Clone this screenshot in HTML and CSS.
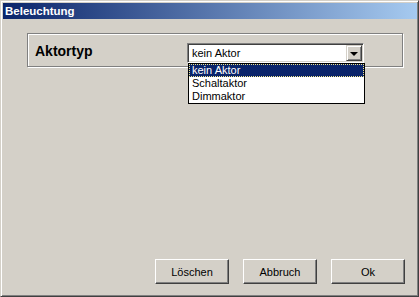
FILE: index.html
```html
<!DOCTYPE html>
<html lang="de">
<head>
  <meta charset="UTF-8">
  <title>Beleuchtung</title>
  <link rel="stylesheet" href="styles.css">
</head>
<body>
  <div class="window">
    <div class="titlebar">Beleuchtung</div>

    <div class="group">
      <label class="label">Aktortyp</label>
      <div class="combo">
        <span class="combo-text">kein Aktor</span>
        <span class="combo-btn"><span class="arrow"></span></span>
        <ul class="droplist">
          <li class="selected">kein Aktor</li>
          <li>Schaltaktor</li>
          <li>Dimmaktor</li>
        </ul>
      </div>
    </div>

    <div class="footer">
      <button class="btn">Löschen</button>
      <button class="btn">Abbruch</button>
      <button class="btn">Ok</button>
    </div>
  </div>
</body>
</html>
```

FILE: styles.css
```css
body { margin: 0; background: #d4d0c8; font-family: "Liberation Sans", Arial, sans-serif; }

.window {
  width: 419px; height: 297px; box-sizing: border-box;
  display: flex; flex-direction: column;
  background: #d4d0c8;
  border: 1px solid; border-color: #d4d0c8 #404040 #404040 #d4d0c8;
  box-shadow: inset 1px 1px #fff, inset -1px -1px #808080;
  padding: 2px 1px 1px 2px;
}

.titlebar {
  height: 16px; line-height: 16px; padding-left: 2px;
  background: linear-gradient(to right, #0a246a, #a6caf0);
  color: #fff; font-weight: bold; font-size: 11.5px;
}

.group {
  position: relative;
  width: 376px; height: 34px; box-sizing: border-box;
  margin: 14px 0 0 24px;
  display: flex; align-items: flex-start;
  padding: 9px 0 0 7px;
  border: 1px solid #808080;
  box-shadow: inset 1px 1px #fff, 1px 1px #fff;
}
.label { width: 152px; font-size: 14px; font-weight: bold; line-height: 16px; }

.combo {
  position: relative;
  width: 177px; height: 20px; box-sizing: border-box;
  background: #fff;
  border: 1px solid; border-color: #808080 #fff #fff #808080;
  box-shadow: inset 1px 1px #404040, inset -1px -1px #d4d0c8;
  display: flex; align-items: center;
  padding: 1px;
}
.combo-text { flex: 1; font-size: 11px; line-height: 16px; padding-left: 3px; }
.combo-btn {
  width: 16px; height: 16px; box-sizing: border-box;
  background: #d4d0c8;
  border: 1px solid; border-color: #d4d0c8 #404040 #404040 #d4d0c8;
  box-shadow: inset 1px 1px #fff, inset -1px -1px #808080;
  display: flex; align-items: center; justify-content: center;
}
.arrow { width: 0; height: 0; border-left: 4px solid transparent; border-right: 4px solid transparent; border-top: 4px solid #000; margin-top: 1px; }

.droplist {
  position: absolute; left: 0; top: calc(100% + 1px);
  width: 177px; box-sizing: border-box;
  margin: 0; padding: 0; list-style: none;
  background: #fff; border: 1px solid #000;
  font-size: 11px; z-index: 2;
}
.droplist li { height: 13px; line-height: 13px; padding-left: 3px; }
.droplist li.selected { background: #0a246a; color: #fff; outline: 1px dotted #f0e68c; outline-offset: -1px; }

.footer {
  margin-top: auto;
  display: flex; justify-content: flex-end; gap: 14px;
  padding: 0 12px 11px 0;
}
.btn {
  width: 74px; height: 25px; box-sizing: border-box; padding: 0;
  background: #d4d0c8; color: #000;
  font-family: "Liberation Sans", Arial, sans-serif; font-size: 11px;
  border: 1px solid; border-color: #fff #404040 #404040 #fff;
  box-shadow: inset -1px -1px #808080;
}
```
